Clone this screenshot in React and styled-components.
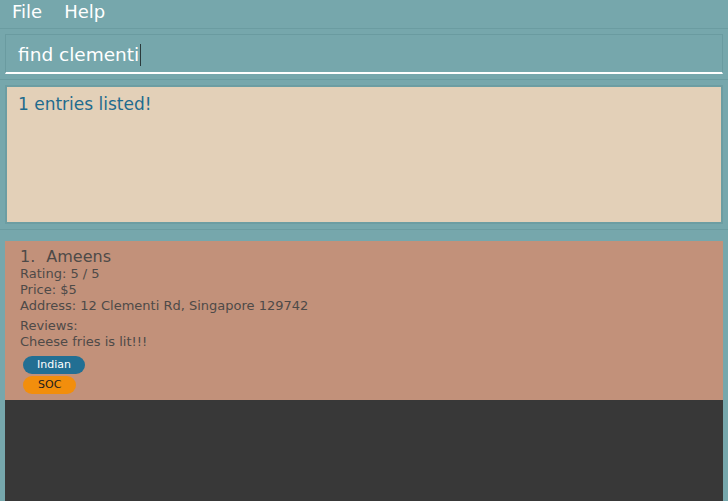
import styled, { createGlobalStyle } from 'styled-components'

const GlobalStyle = createGlobalStyle`
  html, body {
    margin: 0;
    padding: 0;
    background-color: #76a7ac;
    font-family: "DejaVu Sans", "Liberation Sans", sans-serif;
  }
`

const Window = styled.div`
  width: 728px;
  height: 501px;
  display: flex;
  flex-direction: column;
  overflow: hidden;
  background-color: #76a7ac;
`

const MenuBar = styled.nav`
  height: 29px;
  flex: 0 0 auto;
  box-sizing: border-box;
  padding: 1px 0 0 12px;
  display: flex;
  gap: 22px;
  border-bottom: 1px solid #6b9ca1;
`

const MenuItem = styled.span`
  font-size: 18px;
  color: #ffffff;
`

const Section = styled.section`
  padding: 5px;
  border-bottom: 1px solid #6b9ca1;
`

const CommandBox = styled.div`
  height: 40px;
  box-sizing: border-box;
  border: 1px solid #6a9ba0;
  border-bottom: 2px solid #ffffff;
  padding: 9px 0 0 12px;
  font-size: 18.5px;
  color: #ffffff;
  display: flex;
  align-items: flex-start;
`

const Caret = styled.span`
  display: inline-block;
  width: 1px;
  height: 22px;
  margin-left: 1px;
  background-color: #2b3a3c;
`

const ResultBox = styled.div`
  height: 139px;
  box-sizing: border-box;
  border: 2px solid #6c9da2;
  background-color: #e3d0b8;
  padding: 7px 11px;
  font-size: 17px;
  color: #1f6b8e;
`

const ListArea = styled.div`
  flex: 1;
  margin: 11px 5px 0 5px;
  background-color: #383838;
`

const Card = styled.div`
  background-color: #c2917a;
  padding: 6px 14px 6px 15px;
  color: #4e4a48;
`

const NameRow = styled.div`
  display: flex;
  gap: 11px;
  font-size: 16px;
  line-height: 19px;
`

const Detail = styled.div`
  font-size: 13px;
  line-height: 16px;
  margin-top: ${p => p.$gap || 0}px;
`

const Tags = styled.div`
  display: flex;
  flex-direction: column;
  align-items: flex-start;
  gap: 2px;
  margin: 6px 0 0 3px;
`

const Tag = styled.span`
  height: 18px;
  box-sizing: border-box;
  padding: 0 ${p => p.$pad}px;
  border-radius: 9px;
  font-size: 11px;
  line-height: 18px;
  background-color: ${p => p.$bg};
  color: ${p => p.$fg};
`

const restaurants = [
  {
    name: 'Ameens',
    rating: '5 / 5',
    price: '$5',
    address: '12 Clementi Rd, Singapore 129742',
    review: 'Cheese fries is lit!!!',
    tags: [
      { label: 'Indian', bg: '#226f93', fg: '#ffffff', pad: 14 },
      { label: 'SOC', bg: '#f28e0c', fg: '#1c1c1c', pad: 15 },
    ],
  },
]

const App = () => {
  return (
    <Window>
      <GlobalStyle />
      <MenuBar>
        <MenuItem>File</MenuItem>
        <MenuItem>Help</MenuItem>
      </MenuBar>
      <Section>
        <CommandBox>
          find clementi<Caret />
        </CommandBox>
      </Section>
      <Section>
        <ResultBox>1 entries listed!</ResultBox>
      </Section>
      <ListArea>
        {restaurants.map((r, i) => (
          <Card key={r.name}>
            <NameRow>
              <span>{i + 1}.</span>
              <span>{r.name}</span>
            </NameRow>
            <Detail>Rating: {r.rating}</Detail>
            <Detail>Price: {r.price}</Detail>
            <Detail>Address: {r.address}</Detail>
            <Detail $gap={4}>Reviews:</Detail>
            <Detail>{r.review}</Detail>
            <Tags>
              {r.tags.map(t => (
                <Tag key={t.label} $bg={t.bg} $fg={t.fg} $pad={t.pad}>{t.label}</Tag>
              ))}
            </Tags>
          </Card>
        ))}
      </ListArea>
    </Window>
  )
}

export default App
